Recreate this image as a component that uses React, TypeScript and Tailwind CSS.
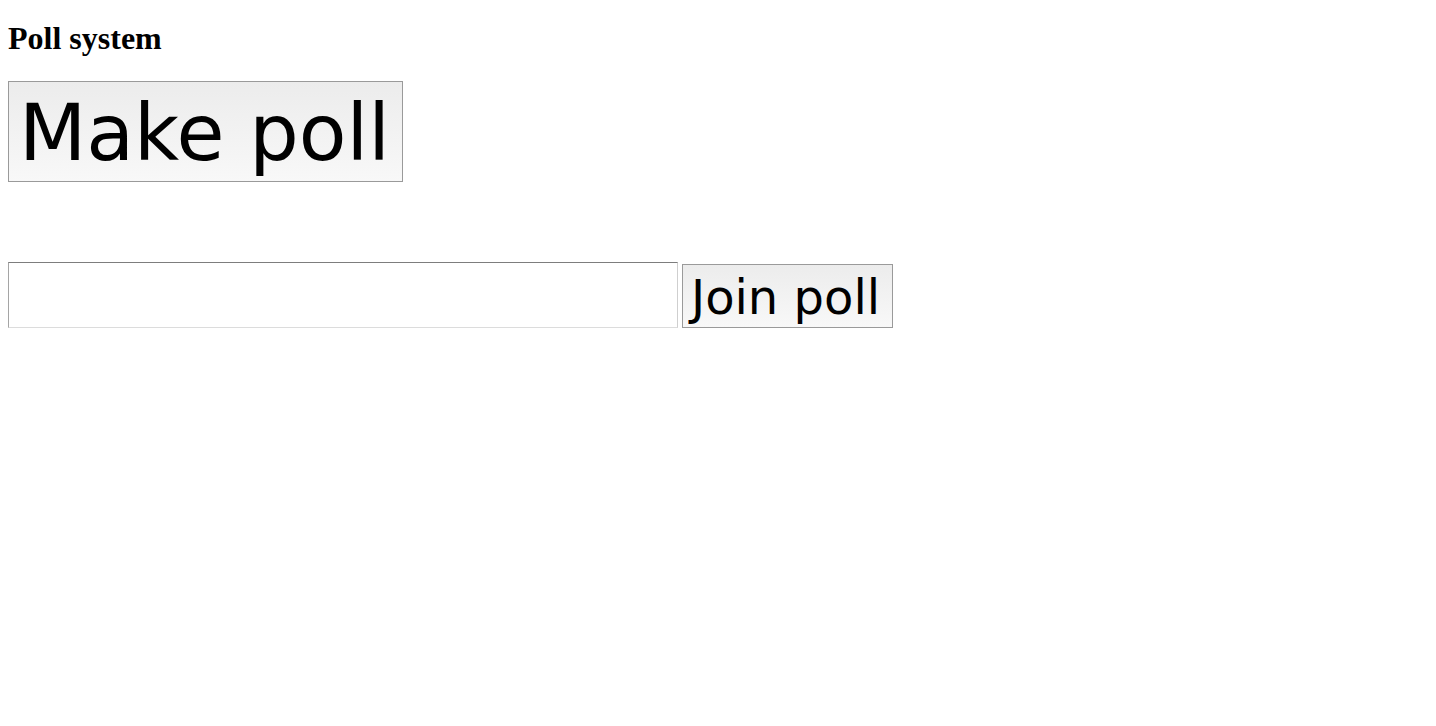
export default function App() {
  return (
    <div className="min-h-screen bg-white px-[8px] pt-[20px] text-black">
      <h1 className="font-['Liberation_Serif',serif] text-[32px] leading-[36px] font-bold">
        Poll system
      </h1>

      <button className="mt-[25px] flex h-[101px] w-[395px] items-center justify-start border border-[#9a9a9a] bg-linear-to-b from-[#ececec] to-[#f8f8f8] pl-[10px] pt-[3px] font-['DejaVu_Sans',sans-serif] text-[78px] leading-[91px]">
        Make poll
      </button>

      <div className="mt-[80px] flex items-end gap-[4px]">
        <input
          type="text"
          className="h-[66px] w-[670px] border border-t-[#7d7d7d] border-l-[#a5a5a5] border-r-[#cfcfcf] border-b-[#dcdcdc] bg-white outline-none"
        />
        <button className="flex h-[64px] w-[211px] items-center justify-start border border-[#9a9a9a] bg-linear-to-b from-[#ececec] to-[#f8f8f8] pl-[8px] pt-[1px] font-['DejaVu_Sans',sans-serif] text-[48px] leading-[56px]">
          Join poll
        </button>
      </div>
    </div>
  );
}
